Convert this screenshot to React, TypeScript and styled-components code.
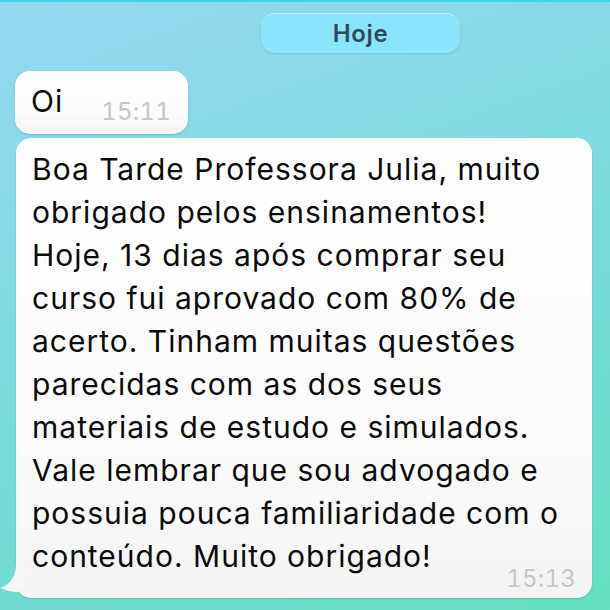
import styled, { createGlobalStyle } from 'styled-components'

const GlobalStyle = createGlobalStyle`
  html, body {
    margin: 0;
    padding: 0;
    overflow: hidden;
  }
  body {
    font-family: Inter, "Noto Sans", sans-serif;
  }
`

const Screen = styled.main`
  width: 610px;
  height: 610px;
  box-sizing: border-box;
  border-top: 2px solid #3dd6ea;
  background: linear-gradient(160deg, #95d8f1 0%, #80dae2 40%, #63dfc2 100%);
  display: flex;
  flex-direction: column;
  align-items: flex-start;
  padding-top: 11px;
`

const DayPill = styled.div`
  margin-left: 261px;
  width: 199px;
  height: 40px;
  box-sizing: border-box;
  border-radius: 14px;
  background: #8ae5fc;
  border-top: 1px solid rgba(255, 255, 255, 0.45);
  box-shadow: 0 1px 2px rgba(30, 90, 110, 0.18);
  display: flex;
  align-items: center;
  justify-content: center;
  color: #2c4a5b;
  font-size: 24px;
  font-weight: 600;
  letter-spacing: 0.6px;
`

const Bubble = styled.div<{ $width?: number }>`
  position: relative;
  box-sizing: border-box;
  width: ${p => (p.$width ? `${p.$width}px` : 'auto')};
  background: linear-gradient(180deg, #ffffff 0%, #fbfbfb 70%, #f3f3f3 100%);
  border-radius: 15px;
  box-shadow: 0 1px 2px rgba(0, 0, 0, 0.16);
  color: #0a0a0a;
  font-size: 30px;
  letter-spacing: 1px;
`

const ShortBubble = styled(Bubble)`
  margin-top: 18px;
  margin-left: 15px;
  display: flex;
  align-items: flex-end;
  gap: 38px;
  padding: 9px 17px 11px 16px;
`

const LongBubble = styled(Bubble)`
  margin-top: 4px;
  margin-left: 16px;
  display: flex;
  flex-direction: column;
  padding: 10px 17px 8px 16px;
`

const Line = styled.span`
  display: block;
  line-height: 43px;
  white-space: nowrap;
`

const Time = styled.span`
  align-self: flex-end;
  font-size: 24px;
  line-height: 23px;
  letter-spacing: 0.2px;
  font-variant-numeric: tabular-nums;
  color: #c6c6cb;
`

const LongTime = styled(Time)`
  margin-top: -11px;
  margin-right: -1px;
`

const Tail = styled.svg`
  position: absolute;
  left: -16px;
  bottom: 0;
  width: 40px;
  height: 44px;
`

const lines = [
  'Boa Tarde Professora Julia, muito',
  'obrigado pelos ensinamentos!',
  'Hoje, 13 dias após comprar seu',
  'curso fui aprovado com 80% de',
  'acerto. Tinham muitas questões',
  'parecidas com as dos seus',
  'materiais de estudo e simulados.',
  'Vale lembrar que sou advogado e',
  'possuia pouca familiaridade com o',
  'conteúdo. Muito obrigado!'
]

export default function App() {
  return (
    <>
      <GlobalStyle />
      <Screen>
        <DayPill>Hoje</DayPill>
        <ShortBubble>
          <Line>Oi</Line>
          <Time>15:11</Time>
        </ShortBubble>
        <LongBubble $width={576}>
          <Tail viewBox="0 0 40 44" aria-hidden>
            <path
              d="M16 0 V10 C16 24 9 31 0 34 C7 37 14 38 20 38 L30 20 Z"
              fill="#f6f6f6"
            />
          </Tail>
          <div>
            {lines.map(line => (
              <Line key={line}>{line}</Line>
            ))}
          </div>
          <LongTime>15:13</LongTime>
        </LongBubble>
      </Screen>
    </>
  )
}
